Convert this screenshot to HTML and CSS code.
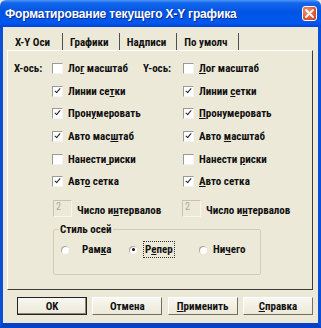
FILE: index.html
```html
<!DOCTYPE html>
<html lang="ru">
<head>
    <meta charset="UTF-8">
    <title>Форматирование текущего X-Y графика</title>
    <link rel="stylesheet" href="styles.css">
</head>
<body>
    <div class="window">
        <div class="titlebar">
            <span class="title">Форматирование текущего X-Y графика</span>
            <span class="close">
                <svg width="9" height="9" viewBox="0 0 9 9"><path d="M1 1L8 8M8 1L1 8" stroke="#fff" stroke-width="1.8" stroke-linecap="round"/></svg>
            </span>
        </div>
        <div class="frame">
            <div class="tabs">
                <div class="tab active">X-Y Оси</div>
                <div class="tab">Графики</div>
                <div class="tab">Надписи</div>
                <div class="tab">По умолч</div>
            </div>
            <div class="panel">
                <div class="grid">
                    <span class="axis">X-ось:</span>
                    <label class="check"><span class="box"></span><span>Ло<u>г</u> масштаб</span></label>
                    <span class="axis">Y-ось:</span>
                    <label class="check"><span class="box"></span><span><u>Л</u>ог масштаб</span></label>

                    <span></span>
                    <label class="check"><span class="box on"></span><span>Линии се<u>т</u>ки</span></label>
                    <span></span>
                    <label class="check"><span class="box on"></span><span>Линии <u>с</u>етки</span></label>

                    <span></span>
                    <label class="check"><span class="box on"></span><span>Прон<u>у</u>меровать</span></label>
                    <span></span>
                    <label class="check"><span class="box on"></span><span><u>П</u>ронумеровать</span></label>

                    <span></span>
                    <label class="check"><span class="box on"></span><span>Авто мас<u>ш</u>таб</span></label>
                    <span></span>
                    <label class="check"><span class="box on"></span><span>Авто <u>м</u>асштаб</span></label>

                    <span></span>
                    <label class="check"><span class="box"></span><span>Нанести<u> </u>риски</span></label>
                    <span></span>
                    <label class="check"><span class="box"></span><span>Нанести <u>р</u>иски</span></label>

                    <span></span>
                    <label class="check"><span class="box on"></span><span>Авт<u>о</u> сетка</span></label>
                    <span></span>
                    <label class="check"><span class="box on"></span><span><u>А</u>вто сетка</span></label>
                </div>

                <div class="grid intervals">
                    <span></span>
                    <div class="num"><span class="field">2</span><span>Число и<u>н</u>тервалов</span></div>
                    <span></span>
                    <div class="num right"><span class="field">2</span><span>Число и<u>н</u>тервалов</span></div>
                </div>

                <fieldset class="group">
                    <legend>Стиль осей</legend>
                    <div class="radios">
                        <label class="radio wide"><span class="dot"></span><span>Рам<u>к</u>а</span></label>
                        <label class="radio"><span class="dot on"></span><span class="focus">Р<u>е</u>пер</span></label>
                        <label class="radio"><span class="dot"></span><span>Ни<u>ч</u>его</span></label>
                    </div>
                </fieldset>
            </div>
            <div class="buttons">
                <button class="default">OK</button>
                <button>Отмена</button>
                <button><u>П</u>рименить</button>
                <button><u>С</u>правка</button>
            </div>
        </div>
    </div>
</body>
</html>
```

FILE: styles.css
```css
body, html {
    margin: 0;
    padding: 0;
    background-color: #ece9d8;
}
.window {
    width: 321px;
    height: 328px;
    display: flex;
    flex-direction: column;
    font-family: "Roboto Condensed", "Liberation Sans", Arial, sans-serif;
    font-weight: bold;
    font-size: 11px;
    color: #111;
    white-space: nowrap;
}
.titlebar {
    height: 27px;
    flex: none;
    display: flex;
    align-items: center;
    justify-content: space-between;
    padding: 0 4px 0 5px;
    box-sizing: border-box;
    background: linear-gradient(#4a96f8 0, #1466ec 3px, #0054e3 45%, #0058ee 85%, #0343d6 100%);
    border-radius: 6px 6px 0 0;
}
.title {
    color: white;
    font-family: "Liberation Sans", Arial, sans-serif;
    font-size: 12px;
    letter-spacing: -0.15px;
    text-shadow: 1px 1px 0 #0a2a8a;
}
.close {
    width: 15px;
    height: 15px;
    display: flex;
    align-items: center;
    justify-content: center;
    border: 1px solid #fff;
    border-radius: 3px;
    box-sizing: border-box;
    background: radial-gradient(circle at 35% 35%, #f29b7c, #e0552e 60%, #c9401f);
}
.frame {
    flex: 1;
    display: flex;
    flex-direction: column;
    border: solid #0a4fd6;
    border-width: 0 3px 5px 3px;
    border-bottom-color: #0641c6;
    padding: 6px 5px 0 4px;
}
.tabs {
    display: flex;
    height: 17px;
}
.tab {
    padding: 2px 10px 0 7px;
    border-right: 1px solid #505050;
    height: 15px;
    line-height: 15px;
}
.tab.active {
    padding-left: 8px;
    padding-right: 12px;
}
.panel {
    height: 240px;
    box-sizing: border-box;
    border-top: 1px solid #fff;
    border-left: 1px solid #fff;
    border-right: 1px solid #3c3c3c;
    border-bottom: 1px solid #3c3c3c;
    padding: 6px 0 0 6px;
}
.grid {
    display: grid;
    grid-template-columns: 38px 91px 40px 1fr;
    grid-auto-rows: 22.7px;
    align-items: center;
}
.check {
    display: flex;
    align-items: center;
    gap: 5px;
}
.box {
    width: 9px;
    height: 9px;
    flex: none;
    background: #fff;
    border-top: 1px solid #9a9a9a;
    border-left: 1px solid #9a9a9a;
    border-right: 1px solid #f4f4f4;
    border-bottom: 1px solid #f4f4f4;
    position: relative;
}
.box.on::after {
    content: "";
    position: absolute;
    left: 3px;
    top: 0;
    width: 2px;
    height: 5px;
    border: solid #222;
    border-width: 0 1.5px 1.5px 0;
    transform: rotate(40deg);
}
.intervals {
    grid-auto-rows: 19px;
    margin-top: 5px;
    align-items: end;
}
.num {
    display: flex;
    align-items: flex-end;
    gap: 5px;
    margin-left: 1px;
}
.num.right {
    margin-left: -1px;
}
.field {
    width: 19px;
    height: 17px;
    flex: none;
    border: 1px solid #c5c3b5;
    border-right-color: #f6f6f0;
    border-bottom-color: #f6f6f0;
    color: #a8a8a0;
    font-weight: normal;
    font-size: 10px;
    line-height: 12px;
    padding-left: 2px;
    box-sizing: border-box;
}
.group {
    width: 208px;
    box-sizing: border-box;
    margin: 6px 0 0 39px;
    padding: 5px 0 16px 7px;
    border: 1px solid #cfcdbf;
    border-radius: 2px;
}
.group legend {
    padding: 0 1px;
    margin-left: -2px;
}
.radios {
    display: grid;
    grid-template-columns: 68px 70px 1fr;
    align-items: center;
}
.radio {
    display: flex;
    align-items: center;
    gap: 6px;
}
.radio.wide {
    gap: 13px;
}
.dot {
    width: 8px;
    height: 8px;
    flex: none;
    border-radius: 50%;
    background: #fff;
    box-shadow: inset 1px 1px 0 #a8a8a0;
    display: flex;
    align-items: center;
    justify-content: center;
}
.dot.on::after {
    content: "";
    width: 3px;
    height: 3px;
    border-radius: 50%;
    background: #111;
}
.focus {
    border: 1px dotted #333;
    padding: 1px 1px;
}
.buttons {
    display: flex;
    justify-content: space-between;
    padding: 7px 0 0 10px;
}
button {
    width: 70px;
    height: 18px;
    padding: 0;
    font: inherit;
    color: #111;
    background: linear-gradient(#f8f7f1, #ece9d8);
    border: 1px solid;
    border-color: #fff #716f64 #716f64 #fff;
}
button.default {
    border: 1px solid #222;
    box-shadow: inset -1px -1px #8a887c;
}
```
